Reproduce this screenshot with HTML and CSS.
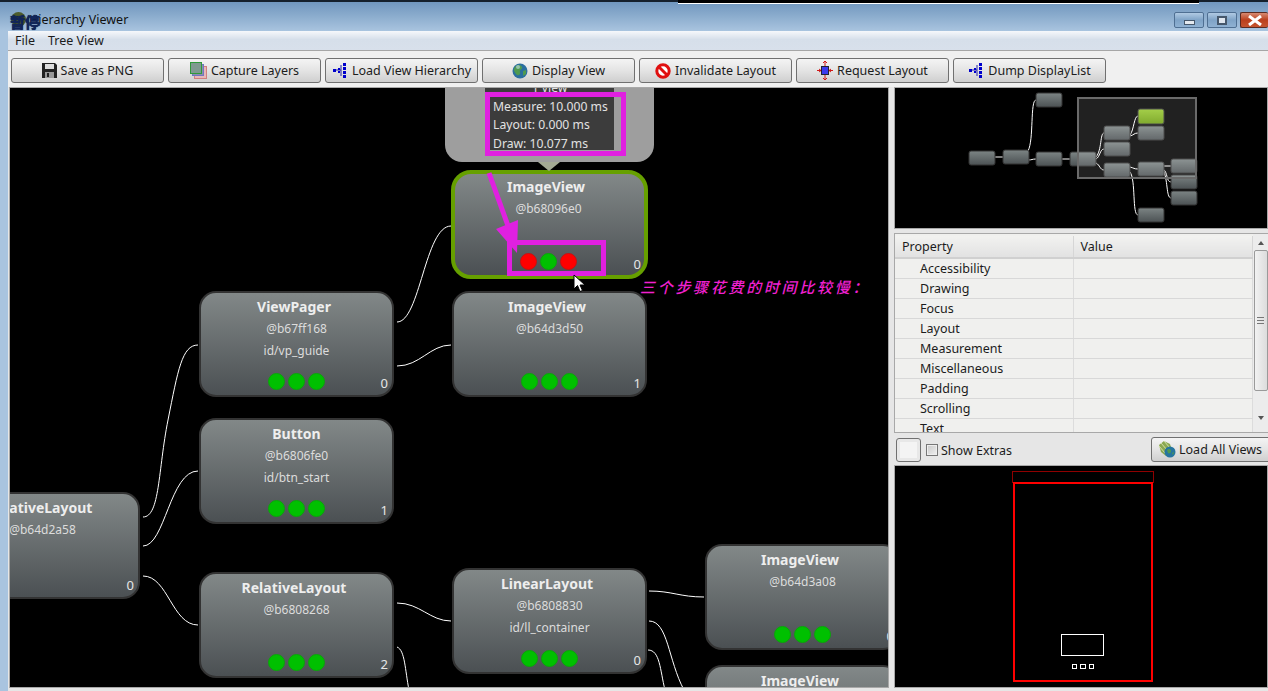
FILE: index.html
```html
<!DOCTYPE html>
<html lang="en">
<head>
<meta charset="utf-8">
<title>Hierarchy Viewer</title>
<link rel="stylesheet" href="styles.css">
</head>
<body>
<header class="titlebar">
  <div class="top-edge"></div>
  <div class="top-line"></div>
  <div class="title-row">
    <span class="title-text">Hierarchy Viewer</span>
    <div class="win-controls">
      <div class="win-btn"><span class="min-glyph"></span></div>
      <div class="win-btn"><span class="max-glyph"></span></div>
      <div class="win-btn win-close"><svg width="16" height="11" viewBox="0 0 16 11"><path d="M2 1 L14 10 M14 1 L2 10" class="close-x"/></svg></div>
    </div>
  </div>
  <div class="pause-badge"><span class="pause-dot"></span><span class="pause-text">暂停</span></div>
</header>
<div class="frame">
  <div class="frame-edge"></div>
  <div class="window">
    <nav class="menubar"><span>File</span><span>Tree View</span></nav>
    <div class="toolbar">
      <button class="tbtn"><svg width="15" height="15" viewBox="0 0 15 15"><path d="M0 0H13L15 2V15H0Z" fill="#222"/><rect x="3" y="1" width="9" height="5" fill="#ddd"/><rect x="3" y="9" width="9" height="6" fill="#999"/><rect x="5" y="10" width="2" height="4" fill="#222"/></svg>Save as PNG</button>
      <button class="tbtn"><svg width="17" height="17" viewBox="0 0 17 17"><rect x="4.500" y="4.500" width="12" height="12" fill="#e8b8b8" stroke="#d08080"/><rect x="2.500" y="2.500" width="11" height="11" fill="#8a8fb0" stroke="#7078c0"/><rect x="0.500" y="0.500" width="11" height="11" fill="#7f9a90" stroke="#2f9a3a"/></svg>Capture Layers</button>
      <button class="tbtn"><svg width="16" height="15" viewBox="0 0 16 15"><path d="M4 7H9M9 2V13" stroke="#22a" fill="none"/><rect x="1" y="6" width="3" height="3" fill="#00c"/><rect x="6" y="5" width="2" height="2" fill="#00c"/><rect x="6" y="8" width="2" height="2" fill="#00c"/><rect x="11" y="0" width="3" height="3" fill="#00c"/><rect x="11" y="4" width="3" height="3" fill="#00c"/><rect x="11" y="8" width="3" height="3" fill="#00c"/><rect x="11" y="12" width="3" height="3" fill="#00c"/></svg>Load View Hierarchy</button>
      <button class="tbtn"><svg width="16" height="16" viewBox="0 0 16 16"><circle cx="8" cy="8" r="7.500" fill="#2b6f9f"/><path d="M3 4C6 1 9 2 10 4S7 7 8 9 6 14 4 11 1 7 3 4ZM11 8L14 7 14 11 11 13Z" fill="#4f9a50"/><circle cx="6" cy="4" r="2" fill="#c7e0ea" opacity=".6"/></svg>Display View</button>
      <button class="tbtn"><svg width="16" height="16" viewBox="0 0 16 16"><circle cx="8" cy="8" r="6.200" fill="#fff" stroke="#e01010" stroke-width="3"/><path d="M4 4L12 12" stroke="#e01010" stroke-width="3"/></svg>Invalidate Layout</button>
      <button class="tbtn"><svg width="16" height="19" viewBox="0 0 16 19"><rect x="4.500" y="5.500" width="7" height="8" fill="#3a3aee" stroke="#223"/><path d="M8 0V5M6 2L8 0 10 2M8 14V19M6 17L8 19 10 17M0 9.500H4M2 8L4 9.500 2 11M16 9.500H12M14 8L12 9.500 14 11" stroke="#d01818" fill="none"/></svg>Request Layout</button>
      <button class="tbtn"><svg width="16" height="15" viewBox="0 0 16 15"><path d="M4 7H9M9 2V13" stroke="#22a" fill="none"/><rect x="1" y="6" width="3" height="3" fill="#00c"/><rect x="6" y="5" width="2" height="2" fill="#00c"/><rect x="6" y="8" width="2" height="2" fill="#00c"/><rect x="11" y="0" width="3" height="3" fill="#00c"/><rect x="11" y="4" width="3" height="3" fill="#00c"/><rect x="11" y="8" width="3" height="3" fill="#00c"/><rect x="11" y="12" width="3" height="3" fill="#00c"/></svg>Dump DisplayList</button>
    </div>
    <main class="main">
      <section class="tree-canvas">
        <svg class="wires" width="878" height="599" viewBox="10 88 878 599">
          <path d="M143 517C160 517 158 470 168 420S182 345 198 345"/>
          <path d="M143 546C165 546 170 471 198 471"/>
          <path d="M143 576C168 576 172 625 198 625"/>
          <path d="M397 322C420 322 425 226 451 226"/>
          <path d="M397 366C420 366 430 345 451 345"/>
          <path d="M397 603C420 603 430 621 451 621"/>
          <path d="M397 647C405 650 405 670 409 690"/>
          <path d="M649 591C672 591 680 597 704 597"/>
          <path d="M649 621C668 621 668 660 684 690"/>
          <path d="M648 650C660 650 660 670 665 690"/>
        </svg>

        <article class="node node-root"><h3>RelativeLayout</h3><p>@b64d2a58</p><b class="node-idx">0</b></article>
        <article class="node node-vp"><h3>ViewPager</h3><p>@b67ff168</p><p>id/vp_guide</p><div class="dots"><i></i><i></i><i></i></div><b class="node-idx">0</b></article>
        <article class="node node-btn"><h3>Button</h3><p>@b6806fe0</p><p>id/btn_start</p><div class="dots"><i></i><i></i><i></i></div><b class="node-idx">1</b></article>
        <article class="node node-rl"><h3>RelativeLayout</h3><p>@b6808268</p><div class="dots"><i></i><i></i><i></i></div><b class="node-idx">2</b></article>
        <article class="node node-sel"><h3>ImageView</h3><p>@b68096e0</p><div class="dots"><i class="red"></i><i></i><i class="red"></i></div><b class="node-idx">0</b></article>
        <article class="node node-iv2"><h3>ImageView</h3><p>@b64d3d50</p><div class="dots"><i></i><i></i><i></i></div><b class="node-idx">1</b></article>
        <article class="node node-ll"><h3>LinearLayout</h3><p>@b6808830</p><p>id/ll_container</p><div class="dots"><i></i><i></i><i></i></div><b class="node-idx">0</b></article>
        <article class="node node-iv3"><h3>ImageView</h3><p>@b64d3a08</p><div class="dots"><i></i><i></i><i></i></div><b class="node-idx">0</b></article>
        <article class="node node-iv4"><h3>ImageView</h3><p>@b64d3890</p></article>

        <div class="tip">
          <div class="tip-panel">
            <div class="tip-center">1 view</div>
            <div>Measure: 10.000 ms</div>
            <div>Layout: 0.000 ms</div>
            <div>Draw: 10.077 ms</div>
          </div>
        </div>

        <div class="mark mark-tip"></div>
        <div class="mark mark-dots"></div>
        <svg class="arrow" width="50" height="90" viewBox="0 0 50 90"><path d="M3 2L26 66" class="arrow-line"/><path d="M10 58L32 49 31 82Z" class="arrow-head"/></svg>
        <svg class="cursor" width="13" height="19" viewBox="0 0 13 19"><path d="M1 1V15L4.500 11.500 7 17.500 9.500 16.500 7 11H12Z" fill="#fff" stroke="#000"/></svg>
        <div class="note">三个步骤花费的时间比较慢：</div>
      </section>

      <aside class="side">
        <div class="overview">
          <svg width="372" height="140" viewBox="895 88 372 140">
            <defs>
              <linearGradient id="ovg" x1="0" y1="0" x2="0" y2="1"><stop offset="0" stop-color="#7c8484"/><stop offset="1" stop-color="#4c5254"/></linearGradient>
              <linearGradient id="ovs" x1="0" y1="0" x2="0" y2="1"><stop offset="0" stop-color="#97c82f"/><stop offset="1" stop-color="#6e9e10"/></linearGradient>
            </defs>
            <g class="ov-wires">
              <path d="M994 157H1003"/>
              <path d="M1028 151C1034 140 1030 100 1036 100"/>
              <path d="M1028 160C1032 160 1032 159 1036 159"/>
              <path d="M1062 159H1070"/>
              <path d="M1096 157C1102 150 1100 133 1104 133"/>
              <path d="M1096 159C1100 157 1100 149 1104 149"/>
              <path d="M1096 163C1100 165 1100 170 1104 170"/>
              <path d="M1130 135C1134 130 1134 116 1138 116"/>
              <path d="M1130 136C1134 135 1134 133 1138 133"/>
              <path d="M1130 167C1134 168 1134 169 1138 169"/>
              <path d="M1130 172C1136 180 1132 215 1138 215"/>
              <path d="M1163 166H1171"/>
              <path d="M1163 169C1168 172 1166 182 1171 182"/>
              <path d="M1163 170C1168 178 1166 198 1171 198"/>
            </g>
            <g fill="url(#ovg)" stroke="#333">
              <rect x="969" y="151" width="26" height="14" rx="2"/>
              <rect x="1003" y="150" width="26" height="14" rx="2"/>
              <rect x="1036" y="93" width="26" height="14" rx="2"/>
              <rect x="1036" y="152" width="26" height="14" rx="2"/>
              <rect x="1070" y="152" width="26" height="14" rx="2"/>
              <rect x="1104" y="126" width="26" height="14" rx="2"/>
              <rect x="1104" y="142" width="26" height="14" rx="2"/>
              <rect x="1104" y="163" width="26" height="14" rx="2"/>
              <rect x="1138" y="126" width="26" height="14" rx="2"/>
              <rect x="1138" y="162" width="26" height="14" rx="2"/>
              <rect x="1138" y="208" width="26" height="14" rx="2"/>
              <rect x="1171" y="159" width="26" height="14" rx="2"/>
              <rect x="1171" y="175" width="26" height="14" rx="2"/>
              <rect x="1171" y="191" width="26" height="14" rx="2"/>
              <rect x="1138" y="109" width="26" height="15" rx="2" fill="url(#ovs)"/>
            </g>
            <rect x="1078" y="98" width="118" height="80" class="ov-view"/>
          </svg>
        </div>

        <div class="props">
          <div class="props-scroll">
            <table class="props-table">
              <thead><tr><th>Property</th><th>Value</th></tr></thead>
              <tbody>
                <tr><td>Accessibility</td><td></td></tr>
                <tr><td>Drawing</td><td></td></tr>
                <tr><td>Focus</td><td></td></tr>
                <tr><td>Layout</td><td></td></tr>
                <tr><td>Measurement</td><td></td></tr>
                <tr><td>Miscellaneous</td><td></td></tr>
                <tr><td>Padding</td><td></td></tr>
                <tr><td>Scrolling</td><td></td></tr>
                <tr><td>Text</td><td></td></tr>
              </tbody>
            </table>
          </div>
          <div class="scrollbar">
            <span class="sb-up"></span>
            <div class="sb-thumb"><span class="sb-grip"></span></div>
            <span class="sb-down"></span>
          </div>
        </div>

        <div class="controls">
          <button class="swatch"><span></span></button>
          <label class="check"><span class="check-box"></span>Show Extras</label>
          <button class="load-all"><svg width="18" height="18" viewBox="0 0 18 18"><path d="M1 5L6 1 12 4 14 10 8 16 3 12Z" fill="#8aa850"/><path d="M3 3L9 10M6 1L12 8M1 6L7 13" stroke="#d4dfa8" fill="none"/><circle cx="12" cy="12" r="5.500" fill="#25759f"/><path d="M9 10C11 8 13 9 13 11S11 14 10 13ZM14 13L16 12 15 15Z" fill="#4f9a50"/></svg>Load All Views</button>
        </div>

        <div class="layout-view">
          <svg width="372" height="221" viewBox="895 466 372 221">
            <rect x="1012.500" y="471.500" width="141" height="11" class="lv-dim"/>
            <rect x="1014" y="483" width="138" height="198" class="lv-red"/>
            <rect x="1061.500" y="634.500" width="42" height="21" class="lv-white"/>
            <rect x="1072.500" y="664.500" width="4" height="4" class="lv-white"/>
            <rect x="1080.500" y="664.500" width="5" height="4" class="lv-white"/>
            <rect x="1089.500" y="664.500" width="4" height="4" class="lv-white"/>
          </svg>
        </div>
      </aside>
    </main>
    <div class="bottom-edge"></div>
  </div>
</div>
</body>
</html>
```

FILE: styles.css
```css
* { box-sizing: border-box; }
html, body { margin: 0; height: 100%; }
body {
  width: 1268px;
  height: 691px;
  overflow: hidden;
  display: flex;
  flex-direction: column;
  font-family: "Noto Sans", "Noto Sans CJK SC", sans-serif;
  font-size: 12.5px;
  color: #1c1c1c;
  background: #e6e6e6;
}

/* Title bar */
.titlebar {
  position: relative;
  height: 31px;
  flex: none;
  display: flex;
  flex-direction: column;
  background: linear-gradient(#6d94bc, #87a9cb 45%, #a9c4df);
}
.top-edge { height: 2px; background: #15202c; flex: none; }
.top-line { position: absolute; left: 678px; top: 0; width: 521px; height: 4px; background: #000; border-bottom: 1px solid #fff; }
.title-row { flex: 1; display: flex; align-items: flex-start; justify-content: space-between; }
.title-text { margin: 9px 0 0 29px; font-size: 12.5px; color: #111; line-height: 17px; }
.win-controls { display: flex; gap: 3px; margin-top: 10px; }
.win-btn {
  width: 30px;
  height: 16px;
  border: 1px solid #4f6f92;
  border-radius: 2px;
  display: flex;
  align-items: center;
  justify-content: center;
  background: linear-gradient(#b0cae3, #7fa3c7 50%, #8fb1d2);
}
.win-close { width: 28px; background: linear-gradient(#d68a72, #bb3f1c 50%, #c5542f); border-color: #5a2a20; border-right: 0; }
.min-glyph { width: 11px; height: 5px; margin-top: 4px; background: #e4e9ef; border: 1px solid #46586c; }
.max-glyph { width: 10px; height: 9px; border: 2px solid #46586c; background: #dfe6ee; }
.close-x { stroke: #fff; stroke-width: 3; fill: none; }
.pause-badge { position: absolute; left: 10px; top: 12px; width: 32px; height: 19px; }
.pause-dot { position: absolute; left: 1px; top: 0; width: 15px; height: 15px; border-radius: 50%; background: #4d5c2e; }
.pause-text {
  position: absolute;
  left: 0;
  top: 0;
  font-family: "Noto Sans CJK SC", sans-serif;
  font-size: 15px;
  font-weight: 900;
  line-height: 19px;
  color: #11255a;
  text-shadow: 0 0 1px #0b1a40;
}

/* Frame */
.frame { flex: 1; display: flex; min-height: 0; }
.frame-edge { width: 8px; flex: none; background: #a9c4df; }
.window { flex: 1; display: flex; flex-direction: column; min-width: 0; background: #e6e6e6; }
.menubar {
  height: 20px;
  flex: none;
  display: flex;
  gap: 13px;
  padding: 0 0 0 7px;
  align-items: center;
  font-size: 12.5px;
  background: linear-gradient(#f6f8fb, #d6dfea 45%, #d8e0eb);
  border-bottom: 1px solid #a6a6a6;
}
.toolbar {
  height: 36px;
  flex: none;
  display: flex;
  gap: 4px;
  padding: 7px 3px 0;
  background: #f0f0f0;
}
.tbtn {
  width: 153px;
  height: 25px;
  padding: 0;
  display: flex;
  align-items: center;
  justify-content: center;
  gap: 4px;
  font: inherit;
  color: #1c1c1c;
  border: 1px solid #707070;
  border-radius: 3px;
  background: linear-gradient(#f4f4f4, #e4e4e4 50%, #cfcfcf);
}
.tbtn svg { flex: none; }

/* Main */
.main { flex: 1; display: flex; min-height: 0; gap: 5px; padding-left: 1px; background: #e6e6e6; }
.tree-canvas {
  position: relative;
  width: 880px;
  flex: none;
  overflow: hidden;
  background: #000;
  border: 1px solid #a8a8a8;
}
.wires { position: absolute; left: 0; top: 0; }
.wires path { fill: none; stroke: #fff; stroke-width: 1; }

/* Nodes on the free canvas */
.node {
  position: absolute;
  width: 195px;
  height: 106px;
  padding: 3px 0 5px;
  display: flex;
  flex-direction: column;
  align-items: center;
  border: 2px solid #333;
  border-radius: 17px;
  color: #e2e2e2;
  background: linear-gradient(#828888, #4b5053);
}
.node h3 { margin: 0 5px 0 0; font-size: 14px; line-height: 22px; font-weight: 700; color: #eee; }
.node p { margin: 0; font-size: 12px; line-height: 22px; color: #dcdcdc; }
.dots { margin-top: auto; display: flex; gap: 3px; }
.dots i { width: 17px; height: 17px; border-radius: 50%; background: #00c000; border: 1px solid #0aa50a; }
.dots i.red { background: #f00; border-color: #c81010; }
.node-idx { position: absolute; right: 4px; bottom: 4px; font-size: 13px; font-weight: 400; line-height: 16px; color: #e6e6e6; }
.node-root { left: -65px; top: 404px; height: 107px; }
.node-vp { left: 189px; top: 203px; }
.node-btn { left: 189px; top: 330px; }
.node-btn h3 { margin-right: 0; }
.node-rl { left: 189px; top: 484px; }
.node-sel { left: 441px; top: 82px; width: 197px; height: 109px; border: 4px solid #66a000; padding: 2px 2px 5px 0; border-radius: 20px; }
.node-sel .node-idx { right: 3px; bottom: 3px; }
.node-iv2 { left: 442px; top: 203px; }
.node-ll { left: 442px; top: 480px; }
.node-iv3 { left: 695px; top: 456px; }
.node-iv4 { left: 695px; top: 577px; }

/* Tooltip */
.tip {
  position: absolute;
  left: 435px;
  top: 0;
  width: 209px;
  height: 74px;
  padding: 0 40px;
  background: #9e9e9e;
  border-radius: 0 0 17px 17px;
}
.tip::after {
  content: "";
  position: absolute;
  left: 93px;
  top: 74px;
  border: 11px solid transparent;
  border-top: 9px solid #a4aa94;
  border-bottom: 0;
}
.tip-panel {
  margin-top: -9px;
  height: 71px;
  padding-left: 8px;
  font-size: 12.200px;
  line-height: 18.500px;
  color: #e2e2e2;
  background: #3c3c3c;
}
.tip-center { text-align: center; padding-right: 8px; }

/* Annotations */
.mark { position: absolute; border: 5px solid #e020e0; }
.mark-tip { left: 475px; top: 4px; width: 141px; height: 64px; }
.mark-dots { left: 497px; top: 152px; width: 99px; height: 36px; }
.arrow { position: absolute; left: 476px; top: 83px; }
.arrow-line { stroke: #e020e0; stroke-width: 5; fill: none; }
.arrow-head { fill: #e020e0; }
.cursor { position: absolute; left: 563px; top: 186px; }
.note {
  position: absolute;
  left: 630px;
  top: 188px;
  font-family: "Noto Sans CJK SC", sans-serif;
  font-size: 15px;
  font-weight: 500;
  font-style: italic;
  line-height: 22px;
  letter-spacing: 2.700px;
  white-space: nowrap;
  color: #f020d0;
}

/* Side panel */
.side { flex: 1; min-width: 0; display: flex; flex-direction: column; }
.overview { height: 142px; flex: none; background: #000; border: 1px solid #a8a8a8; overflow: hidden; }
.overview svg, .layout-view svg { display: block; }
.ov-wires path { fill: none; stroke: #fff; stroke-width: 1; }
.ov-view { fill: rgba(255, 255, 255, .13); stroke: #6a6a6a; stroke-width: 2; }

.props {
  height: 200px;
  flex: none;
  margin-top: 4px;
  display: flex;
  background: #f0f0ee;
  border-top: 1px solid #a8a8a8;
  border-left: 1px solid #a8a8a8;
  border-bottom: 1px solid #a8a8a8;
}
.props-scroll { flex: 1; min-width: 0; overflow: hidden; padding-top: 2px; }
.props-table { width: 100%; table-layout: fixed; border-collapse: collapse; font-size: 12.5px; }
.props-table th {
  height: 22px;
  padding: 0 0 0 7px;
  text-align: left;
  font-weight: 400;
  background: linear-gradient(#f2f2f0, #e2e2e2);
  border-bottom: 2px solid #d0d0d0;
  border-right: 1px solid #d6d6d6;
}
.props-table th:first-child { width: 178px; }
.props-table td {
  height: 20px;
  padding: 0 0 0 25px;
  border-bottom: 1px solid #d8d8d8;
  border-right: 1px solid #dcdcdc;
}
.scrollbar { width: 15px; flex: none; position: relative; display: flex; flex-direction: column; align-items: center; background: #ececec; }
.sb-up, .sb-down { width: 0; height: 0; border: 3px solid transparent; flex: none; }
.sb-up { border-bottom: 4px solid #555; border-top: 0; margin: 7px 0 5px; }
.sb-down { border-top: 4px solid #555; border-bottom: 0; margin-top: 25px; }
.sb-thumb {
  width: 14px;
  height: 141px;
  flex: none;
  display: flex;
  align-items: center;
  justify-content: center;
  border: 1px solid #9a9a9a;
  border-radius: 2px;
  background: linear-gradient(90deg, #f2f2f2, #dcdcdc);
}
.sb-grip { width: 7px; height: 7px; border-top: 1px solid #777; border-bottom: 1px solid #777; background: linear-gradient(#0000 40%, #777 40%, #777 60%, #0000 60%); }

.controls { height: 32px; flex: none; display: flex; align-items: center; padding-left: 2px; }
.swatch {
  width: 25px;
  height: 24px;
  padding: 3px;
  margin-top: 2px;
  border: 1px solid #707070;
  border-radius: 3px;
  background: #e8e8e8;
}
.swatch span { display: block; width: 100%; height: 100%; background: #f4f4f4; }
.check { display: flex; align-items: center; gap: 3px; margin-left: 5px; margin-top: 2px; }
.check-box { width: 12px; height: 12px; border: 1px solid #777; background: linear-gradient(135deg, #c8c8c8, #f0f0f0); box-shadow: inset 0 0 0 1px #eee; }
.load-all {
  margin-left: auto;
  margin-right: -4px;
  width: 121px;
  height: 25px;
  padding: 0 0 0 6px;
  display: flex;
  align-items: center;
  gap: 3px;
  font: inherit;
  color: #1c1c1c;
  border: 1px solid #707070;
  border-radius: 3px;
  background: linear-gradient(#f4f4f4, #e4e4e4 50%, #cfcfcf);
}
.layout-view { height: 223px; flex: none; background: #000; border: 1px solid #a8a8a8; overflow: hidden; }
.lv-dim { fill: none; stroke: #900000; stroke-width: 1; }
.lv-red { fill: none; stroke: #f00; stroke-width: 2; }
.lv-white { fill: none; stroke: #fff; stroke-width: 1; }
.bottom-edge { height: 3px; flex: none; background: #e6e6e6; }
```
